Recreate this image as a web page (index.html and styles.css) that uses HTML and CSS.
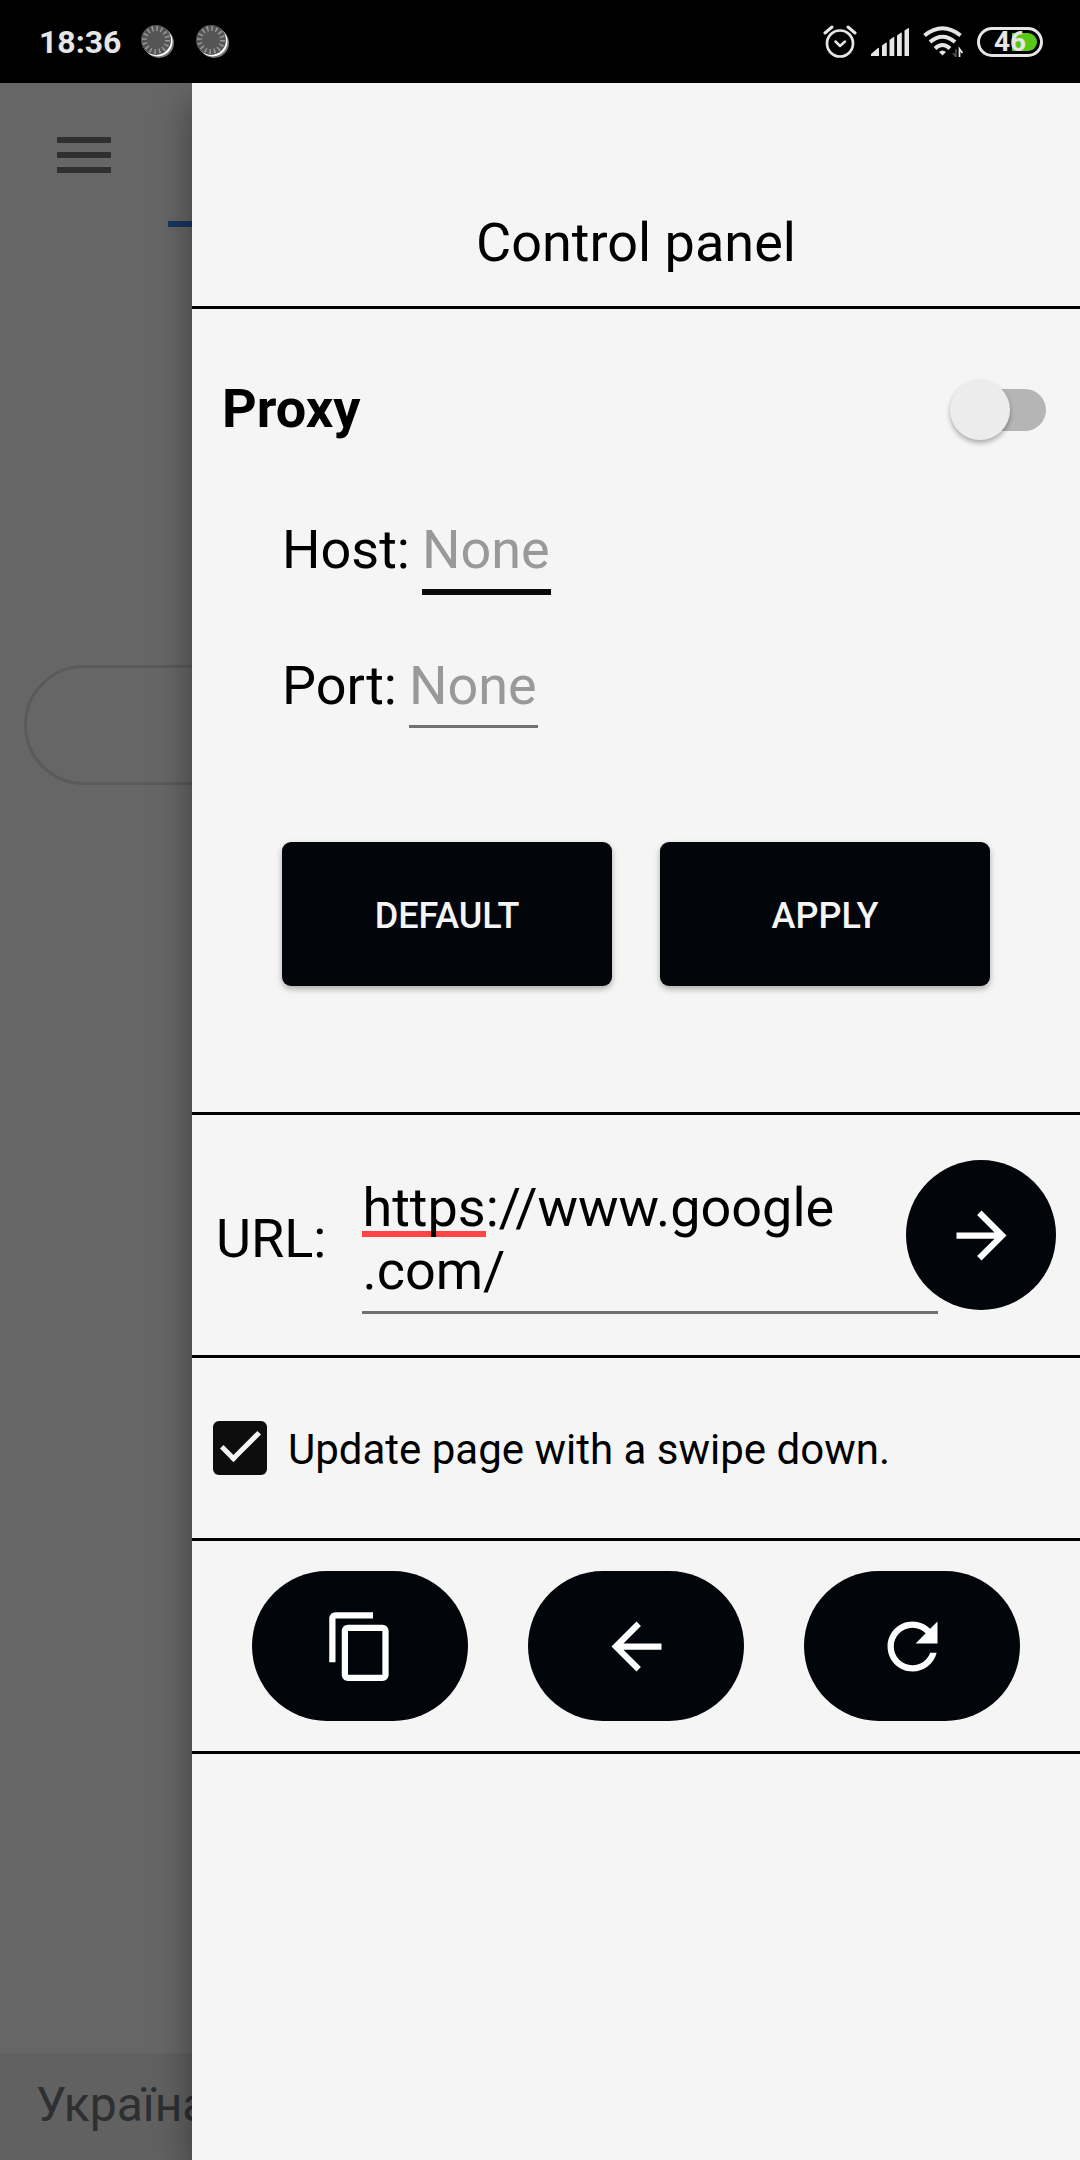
FILE: index.html
```html
<!DOCTYPE html>
<html lang="en">
<head>
<meta charset="utf-8">
<meta name="viewport" content="width=device-width, initial-scale=1">
<title>Control panel</title>
<link rel="stylesheet" href="styles.css">
</head>
<body>
<header class="status">
  <div class="status-left">
    <span class="clock">18:36</span>
    <svg class="notice" viewBox="0 0 33 33" aria-hidden="true"><circle cx="18" cy="18" r="15" fill="#777"/><circle cx="16.500" cy="16.500" r="15" fill="#fff"/><circle cx="15" cy="15" r="15" fill="#555"/><circle cx="15" cy="15" r="11.500" fill="none" stroke="#999" stroke-width="5" stroke-dasharray="1.500 3.016"/></svg>
    <svg class="notice" viewBox="0 0 33 33" aria-hidden="true"><circle cx="18" cy="18" r="15" fill="#777"/><circle cx="16.500" cy="16.500" r="15" fill="#fff"/><circle cx="15" cy="15" r="15" fill="#555"/><circle cx="15" cy="15" r="11.500" fill="none" stroke="#999" stroke-width="5" stroke-dasharray="1.500 3.016"/></svg>
  </div>
  <div class="status-right">
    <svg width="34" height="34" viewBox="0 0 34 34" fill="none" stroke="#e6e6e6" stroke-linecap="round" aria-hidden="true"><circle cx="17" cy="18.500" r="13" stroke-width="2.700"/><path d="M12.500 16.500l4.500 4.500 5-4.500" stroke-width="2.500" stroke-linejoin="round"/><path d="M2 8l7-6M32 8l-7-6" stroke-width="3"/></svg>
    <svg width="38" height="28" viewBox="0 0 38 28" fill="#e6e6e6" aria-hidden="true"><path d="M0 28v-2l7-6q1-.6 1 .5V28zM11 28V17.500l4-3q.8-.4.800.500v13zM18.500 28V12l4-3q.8-.4.800.500V28zM26 28V7.500l4-3q.8-.4.800.500v23zM33.500 28V2.500l4-2.500q.5 0 .500.500V28z"/></svg>
    <svg width="40" height="32" viewBox="0 0 40 32" fill="none" stroke="#e6e6e6" aria-hidden="true"><path d="M1.500 9.500Q19.500-5 37.500 9.500M7 16Q19.500 5.500 32 16M12 22.500Q19.500 15.500 27 22.500" stroke-width="4"/><path d="M16 26q3.500-3 7 0l-3.500 3.500z" fill="#e6e6e6" stroke="none"/><path d="M33 23v8M30 27l3 4" stroke="#555" stroke-width="1.500"/><path d="M36.500 31v-8l3 4" stroke-width="1.800"/></svg>
    <div class="battery"><span class="charge"></span><span class="percent">46</span></div>
  </div>
</header>
<main class="screen">
  <div class="page">
    <div class="page-top">
      <button class="menu" aria-label="Menu"><i></i><i></i><i></i></button>
      <div class="tab-line"></div>
    </div>
    <input class="search" type="search" aria-label="Search">
    <footer class="region">Україна</footer>
  </div>
  <div class="scrim"></div>
  <aside class="drawer">
    <h1 class="title">Control panel</h1>
    <section class="proxy">
      <label class="proxy-head"><span>Proxy</span><input class="switch" type="checkbox" role="switch"></label>
      <div class="fields">
        <label class="field">Host:<input class="active" type="text" placeholder="None"></label>
        <label class="field">Port:<input type="text" placeholder="None"></label>
      </div>
      <div class="actions"><button>DEFAULT</button><button>APPLY</button></div>
    </section>
    <section class="address">
      <label for="url">URL:</label>
      <div class="url-box"><span class="misspelt"></span><textarea id="url" rows="2" spellcheck="false">https://www.google
.com/</textarea></div>
      <button class="go" aria-label="Go"><svg viewBox="0 0 24 24"><path d="M12 4l-1.410 1.410L16.170 11H4v2h12.170l-5.580 5.590L12 20l8-8z"/></svg></button>
    </section>
    <section class="option">
      <label><input class="tick" type="checkbox" checked><span>Update page with a swipe down.</span></label>
    </section>
    <nav class="tools">
      <button aria-label="Copy"><svg viewBox="0 0 24 24"><path d="M16 1H4c-1.100 0-2 .9-2 2v14h2V3h12V1zm3 4H8c-1.100 0-2 .9-2 2v14c0 1.100.9 2 2 2h11c1.100 0 2-.9 2-2V7c0-1.100-.9-2-2-2zm0 16H8V7h11v14z"/></svg></button>
      <button aria-label="Back"><svg viewBox="0 0 24 24"><path d="M20 11H7.830l5.590-5.590L12 4l-8 8 8 8 1.410-1.410L7.830 13H20v-2z"/></svg></button>
      <button aria-label="Reload"><svg viewBox="0 0 24 24"><path d="M17.650 6.350C16.200 4.900 14.210 4 12 4c-4.420 0-7.990 3.580-7.990 8s3.570 8 7.990 8c3.730 0 6.840-2.550 7.730-6h-2.080c-.82 2.330-3.040 4-5.650 4-3.310 0-6-2.690-6-6s2.690-6 6-6c1.660 0 3.140.69 4.220 1.780L13 11h7V4l-2.350 2.350z"/></svg></button>
    </nav>
  </aside>
</main>
</body>
</html>
```

FILE: styles.css
```css
*, ::before, ::after { box-sizing: border-box; }
body {
  margin: 0;
  min-height: 100vh;
  display: flex;
  flex-direction: column;
  font-family: Roboto, "Noto Sans", sans-serif;
  font-size: 54px;
  line-height: 63px;
  color: #000;
  background: #000;
}
button, input, textarea { font: inherit; color: inherit; margin: 0; padding: 0; border: 0; background: none; outline: 0; }
svg { flex: none; }

.status {
  height: 83px;
  padding: 0 37px 0 39px;
  display: flex;
  justify-content: space-between;
  align-items: center;
  color: #e6e6e6;
}
.status-left, .status-right { display: flex; align-items: center; }
.status-left { gap: 20px; }
.clock { font-size: 32px; line-height: 40px; font-weight: 700; }
.notice { width: 33px; height: 33px; }
.notice + .notice { margin-left: 2px; }
.status-right { gap: 14px; }
.battery {
  position: relative;
  width: 66px;
  height: 30px;
  border: 3px solid #e6e6e6;
  border-radius: 15px;
  display: flex;
  align-items: center;
  justify-content: center;
}
.charge { position: absolute; top: 3px; right: 3px; bottom: 3px; width: 25px; background: #58c719; border-radius: 0 9px 9px 0; }
.percent { position: relative; font-size: 28px; line-height: 24px; font-weight: 700; }

.screen { flex: 1; display: grid; overflow: hidden; }
.page, .scrim, .drawer { grid-area: 1 / 1; min-width: 0; }
.page { background: #fff; display: flex; flex-direction: column; }
.page-top { height: 582px; padding: 54px 0 0 57px; }
.menu { display: flex; flex-direction: column; gap: 9px; width: 54px; }
.menu i { height: 6px; background: #757575; }
.tab-line { height: 6px; margin: 48px 0 0 111px; background: #4285f4; }
.search { height: 120px; margin: 0 24px; padding: 0 60px; border: 3px solid #dfe1e5; border-radius: 60px; appearance: none; }
.region { margin-top: auto; height: 107px; padding: 24px 36px; background: #f2f2f2; color: #70757a; font-size: 48px; line-height: 56px; }
.scrim { position: relative; background: rgba(0, 0, 0, .6); }

.drawer {
  position: relative;
  margin-left: 192px;
  background: #f5f5f5;
  box-shadow: 0 18px 36px rgba(0, 0, 0, .4);
}
.title, .proxy, .address, .option, .tools { border-bottom: 3px solid #000; }
.title { margin: 0; height: 226px; padding: 128px 0 0; font-size: 54px; font-weight: 400; text-align: center; }

.proxy { height: 806px; padding: 0 30px; }
.proxy-head { height: 202px; padding-right: 4px; display: flex; justify-content: space-between; align-items: center; font-weight: 700; }
.proxy-head span { padding-bottom: 4px; }
.switch { appearance: none; position: relative; width: 96px; height: 60px; }
.switch::before { content: ""; position: absolute; inset: 9px 0 9px 12px; border-radius: 21px; background: #b5b5b5; }
.switch::after { content: ""; position: absolute; left: 0; top: 0; width: 60px; height: 60px; border-radius: 50%; background: #ececec; box-shadow: 0 3px 5px rgba(0, 0, 0, .3); }
.fields { padding-left: 60px; display: flex; flex-direction: column; gap: 52px; }
.field { height: 84px; padding-top: 7px; display: flex; gap: 12px; }
.field input { width: 129px; height: 74px; padding-bottom: 8px; border-bottom: 3px solid #717171; }
.field input.active { height: 77px; border-bottom: 6px solid #0a0a0a; }
.field input::placeholder { color: #999; opacity: 1; }
.actions { margin: 111px 60px 0; display: grid; grid-template-columns: 1fr 1fr; gap: 48px; }
.actions button { height: 144px; padding-top: 3px; border-radius: 9px; background: #02050a; color: #f5f5f5; font-size: 36px; line-height: 42px; font-weight: 500; box-shadow: 0 3px 6px rgba(0, 0, 0, .3); }

.address { height: 243px; padding: 0 24px; display: flex; align-items: center; }
.address label { padding-top: 6px; }
.url-box { position: relative; flex: 1; height: 144px; margin: 14px -32px 0 36px; border-bottom: 3px solid #717171; }
.url-box textarea { position: relative; display: block; width: 100%; height: 132px; padding-top: 6px; resize: none; overflow: hidden; }
.misspelt { position: absolute; left: 0; top: 61px; width: 124px; height: 6px; background: #ff4444; }
.go { position: relative; flex: none; width: 150px; height: 150px; border-radius: 50%; background: #02050a; }
.go svg, .tools svg { display: block; margin: auto; width: 75px; height: 75px; fill: #fff; }

.option { height: 183px; padding: 0 21px; display: flex; align-items: center; }
.option label { display: flex; align-items: center; gap: 21px; font-size: 42px; line-height: 48px; }
.option span { padding-top: 3px; }
.tick { appearance: none; width: 54px; height: 54px; border-radius: 6px; background: #0d0d0d; }
.tick:checked::before { content: ""; display: block; width: 39px; height: 19px; margin: 11px 0 0 8px; border: solid #f5f5f5; border-width: 0 0 5px 5px; transform: rotate(-45deg); }

.tools { height: 213px; padding: 0 60px; display: grid; grid-template-columns: repeat(3, 1fr); gap: 60px; align-items: center; }
.tools button { height: 150px; border-radius: 75px; background: #02050a; }
```
